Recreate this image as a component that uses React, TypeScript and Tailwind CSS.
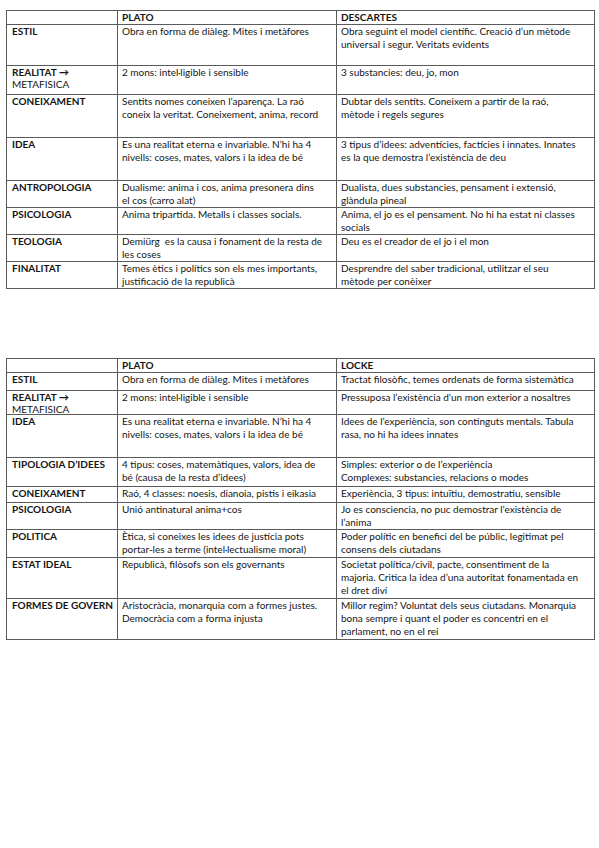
import React from "react";

type Row = { label: string; sub?: string; h: number; a: string[]; b: string[] };

const descartes: Row[] = [
  { label: "ESTIL", h: 41, a: ["Obra en forma de diàleg. Mites i metàfores"], b: ["Obra seguint el model científic. Creació d’un mètode", "universal i segur. Veritats evidents"] },
  { label: "REALITAT →", sub: "METAFISICA", h: 29, a: ["2 mons: intel·ligible i sensible"], b: ["3 substancies: deu, jo, mon"] },
  { label: "CONEIXAMENT", h: 43, a: ["Sentits nomes coneixen l’aparença. La raó", "coneix la veritat. Coneixement, anima, record"], b: ["Dubtar dels sentits. Coneixem a partir de la raó,", "mètode i regels segures"] },
  { label: "IDEA", h: 43, a: ["Es una realitat eterna e invariable. N’hi ha 4", "nivells: coses, mates, valors i la idea de bé"], b: ["3 tipus d’idees: adventícies, factícies i innates. Innates", "es la que demostra l’existència de deu"] },
  { label: "ANTROPOLOGIA", h: 27, a: ["Dualisme: anima i cos, anima presonera dins", "el cos (carro alat)"], b: ["Dualista, dues substancies, pensament i extensió,", "glàndula pineal"] },
  { label: "PSICOLOGIA", h: 27, a: ["Anima tripartida. Metalls i classes socials."], b: ["Anima, el jo es el pensament. No hi ha estat ni classes", "socials"] },
  { label: "TEOLOGIA", h: 27, a: ["Demiürg  es la causa i fonament de la resta de", "les coses"], b: ["Deu es el creador de el jo i el mon"] },
  { label: "FINALITAT", h: 26, a: ["Temes ètics i polítics son els mes importants,", "justificació de la republicà"], b: ["Desprendre del saber tradicional, utilitzar el seu", "mètode per conèixer"] },
];

const locke: Row[] = [
  { label: "ESTIL", h: 18, a: ["Obra en forma de diàleg. Mites i metàfores"], b: ["Tractat filosòfic, temes ordenats de forma sistemàtica"] },
  { label: "REALITAT →", sub: "METAFISICA", h: 23, a: ["2 mons: intel·ligible i sensible"], b: ["Pressuposa l’existència d’un mon exterior a nosaltres"] },
  { label: "IDEA", h: 43, a: ["Es una realitat eterna e invariable. N’hi ha 4", "nivells: coses, mates, valors i la idea de bé"], b: ["Idees de l’experiència, son continguts mentals. Tabula", "rasa, no hi ha idees innates"] },
  { label: "TIPOLOGIA D’IDEES", h: 29, a: ["4 tipus: coses, matemàtiques, valors, idea de", "bé (causa de la resta d’idees)"], b: ["Simples: exterior o de l’experiència", "Complexes: substancies, relacions o modes"] },
  { label: "CONEIXAMENT", h: 16, a: ["Raó, 4 classes: noesis, dianoia, pistis i eikasia"], b: ["Experiència, 3 tipus: intuïtiu, demostratiu, sensible"] },
  { label: "PSICOLOGIA", h: 27, a: ["Unió antinatural anima+cos"], b: ["Jo es consciencia, no puc demostrar l’existència de", "l’anima"] },
  { label: "POLITICA", h: 28, a: ["Ètica, si coneixes les idees de justícia pots", "portar-les a terme (intel·lectualisme moral)"], b: ["Poder polític en benefici del be públic, legitimat pel", "consens dels ciutadans"] },
  { label: "ESTAT IDEAL", h: 41, a: ["Republicà, filòsofs son els governants"], b: ["Societat política/civil, pacte, consentiment de la", "majoria. Critica la idea d’una autoritat fonamentada en", "el dret diví"] },
  { label: "FORMES DE GOVERN", h: 41, a: ["Aristocràcia, monarquia com a formes justes.", "Democràcia com a forma injusta"], b: ["Millor regim? Voluntat dels seus ciutadans. Monarquia", "bona sempre i quant el poder es concentri en el", "parlament, no en el rei"] },
];

const cell = "border border-[#5a5a5a] align-top px-[4px] pt-0";

function Lines({ lines }: { lines: string[] }) {
  return (
    <>
      {lines.map((l, i) => (
        <div key={i} className="whitespace-pre leading-[13px]">{l}</div>
      ))}
    </>
  );
}

function Compare({ other, rows }: { other: string; rows: Row[] }) {
  return (
    <table className="table-fixed border-collapse ml-[6px] w-[588px] text-[10px] text-[#151515]">
      <colgroup>
        <col className="w-[111px]" />
        <col className="w-[219px]" />
        <col className="w-[258px]" />
      </colgroup>
      <tbody>
        <tr className="h-[13px]">
          <td className={cell}></td>
          <td className={`${cell} font-bold leading-[13px]`}>PLATO</td>
          <td className={`${cell} font-bold leading-[13px]`}>{other}</td>
        </tr>
        {rows.map((r) => (
          <tr key={r.label} style={{ height: r.h }}>
            <td className={`${cell} pl-[5px]`}>
              <div className="font-bold leading-[13px] whitespace-nowrap">{r.label}</div>
              {r.sub && <div className="leading-[10px]">{r.sub}</div>}
            </td>
            <td className={cell}><Lines lines={r.a} /></td>
            <td className={cell}><Lines lines={r.b} /></td>
          </tr>
        ))}
      </tbody>
    </table>
  );
}

export default function App() {
  return (
    <div className="w-[599px] h-[848px] bg-white pt-[10px] font-['Lato','Liberation_Sans',sans-serif]">
      <Compare other="DESCARTES" rows={descartes} />
      <div className="h-[69px]" />
      <Compare other="LOCKE" rows={locke} />
    </div>
  );
}
